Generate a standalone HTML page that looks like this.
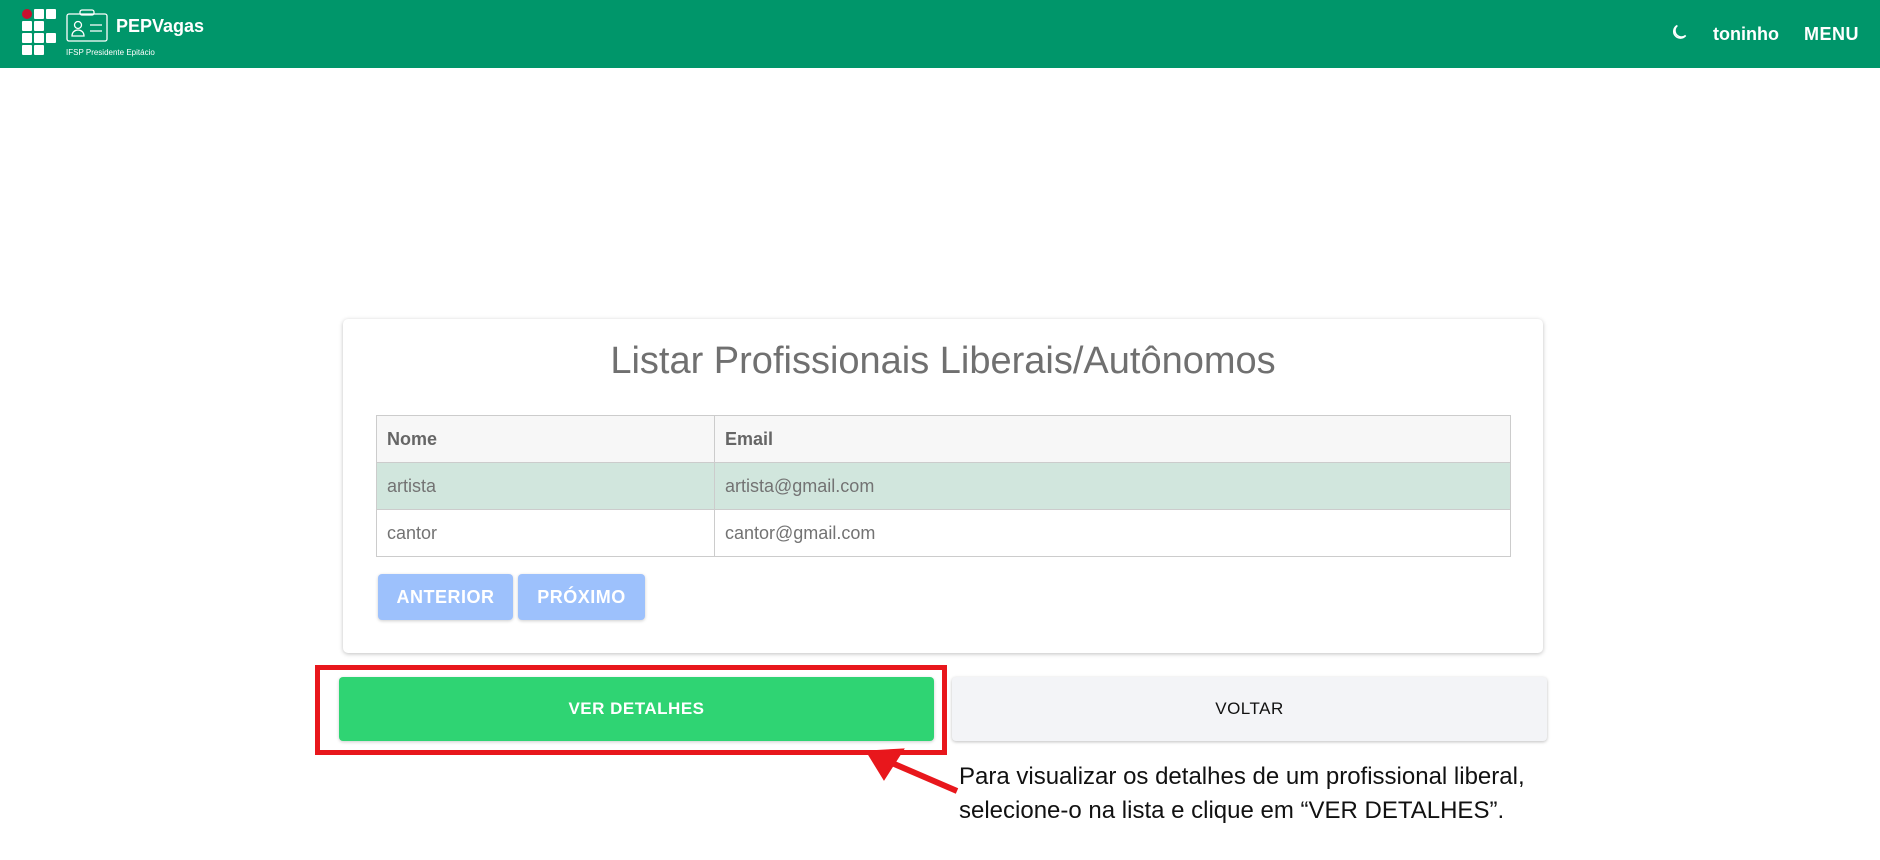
<!DOCTYPE html><html><head><meta charset="utf-8"><style>
*{box-sizing:border-box;margin:0;padding:0}
body{width:1880px;height:860px;background:#fff;font-family:"Liberation Sans",sans-serif;position:relative;overflow:hidden}
.hd{position:absolute;left:0;top:0;width:1880px;height:68px;background:#00966a;color:#fff}
.sq{position:absolute;width:10px;height:10px;background:#fff;border-radius:1px}
.card{position:absolute;left:343px;top:319px;width:1200px;height:334px;background:#fff;border-radius:5px;box-shadow:0 1px 4px rgba(0,0,0,.25)}
table{position:absolute;left:33px;top:96px;width:1135px;border-collapse:collapse;font-size:18px;color:#737373}
td,th{border:1px solid #ccc;height:47px;padding:0 10px;text-align:left}
th{background:#f7f7f7;font-weight:bold;color:#666}
.b{position:absolute;border-radius:4px;font-weight:bold;display:flex;align-items:center;justify-content:center;letter-spacing:.5px}
</style></head><body>
<div class="hd">
<div class="sq" style="left:22px;top:9px;background:#c8102e;border-radius:50%"></div>
<div class="sq" style="left:34px;top:9px"></div><div class="sq" style="left:46px;top:9px"></div>
<div class="sq" style="left:22px;top:21px"></div><div class="sq" style="left:34px;top:21px"></div>
<div class="sq" style="left:22px;top:33px"></div><div class="sq" style="left:34px;top:33px"></div><div class="sq" style="left:46px;top:33px"></div>
<div class="sq" style="left:22px;top:45px"></div><div class="sq" style="left:34px;top:45px"></div>
<svg style="position:absolute;left:66px;top:9px" width="43" height="33" viewBox="0 0 43 33" fill="none" stroke="#fff" stroke-width="1.3"><rect x="1" y="5" width="40" height="27" rx="2"/><rect x="14" y="1" width="14" height="5" rx="2"/><circle cx="12" cy="16" r="3.5"/><path d="M6 27c0-4 3-6 6-6s6 2 6 6z"/><path d="M24 16h12M24 22h12"/></svg>
<div style="position:absolute;left:116px;top:16px;font-size:18px;font-weight:bold">PEPVagas</div>
<div style="position:absolute;left:66px;top:48px;font-size:8px">IFSP Presidente Epitácio</div>
<svg style="position:absolute;left:1669px;top:23px" width="20" height="20" viewBox="0 0 24 24" fill="none" stroke="#fff" stroke-width="1.8"><path d="M20 15A8 8 0 1 1 10 3a7 7 0 0 0 10 12z"/></svg>
<div style="position:absolute;left:1713px;top:24px;font-size:18px;font-weight:bold">toninho</div>
<div style="position:absolute;left:1804px;top:24px;font-size:18px;font-weight:bold;letter-spacing:.5px">MENU</div>
</div>
<div class="card">
<div style="position:absolute;left:0;width:100%;top:21px;text-align:center;font-size:38px;color:#707070">Listar Profissionais Liberais/Autônomos</div>
<table><tr><th style="width:338px">Nome</th><th>Email</th></tr>
<tr style="background:#d1e6dd"><td>artista</td><td>artista@gmail.com</td></tr>
<tr><td>cantor</td><td>cantor@gmail.com</td></tr></table>
<div class="b" style="left:35px;top:255px;width:135px;height:46px;background:#9dc1fc;color:#fff;font-size:18px;box-shadow:0 1px 3px rgba(0,0,0,.2)">ANTERIOR</div>
<div class="b" style="left:175px;top:255px;width:127px;height:46px;background:#9dc1fc;color:#fff;font-size:18px;box-shadow:0 1px 3px rgba(0,0,0,.2)">PRÓXIMO</div>
</div>
<div style="position:absolute;left:315px;top:665px;width:632px;height:90px;border:5px solid #e8171c"></div>
<div class="b" style="left:339px;top:677px;width:595px;height:64px;background:#2fd473;color:#fff;font-size:17px;box-shadow:0 1px 3px rgba(0,0,0,.2)">VER DETALHES</div>
<div class="b" style="left:952px;top:677px;width:595px;height:64px;background:#f3f4f7;color:#111;font-size:17px;font-weight:normal;box-shadow:0 1px 3px rgba(0,0,0,.25)">VOLTAR</div>
<svg style="position:absolute;left:0;top:0" width="1880" height="860"><path d="M957 791L885 760" stroke="#e8171c" stroke-width="6"/><path d="M868 752L902 750L884 778Z" fill="#e8171c" stroke="#e8171c" stroke-width="3"/></svg>
<div style="position:absolute;left:959px;top:760px;font-size:24px;line-height:34px;color:#111;transform:scaleX(1.0);transform-origin:left;white-space:nowrap">Para visualizar os detalhes de um profissional liberal,<br>selecione-o na lista e clique em “VER DETALHES”.</div>
</body></html>
